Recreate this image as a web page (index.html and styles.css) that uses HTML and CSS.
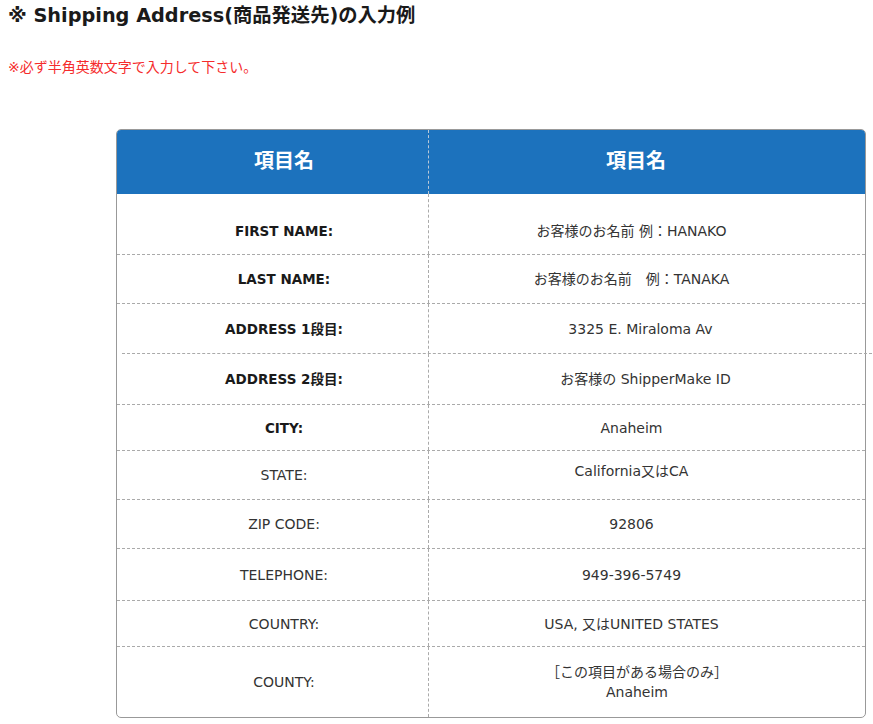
FILE: index.html
```html
<!DOCTYPE html>
<html lang="ja">
<head>
<meta charset="utf-8">
<title>Shipping Address</title>
<link rel="stylesheet" href="styles.css">
</head>
<body>
<h2 class="title">※ Shipping Address(商品発送先)の入力例</h2>
<p class="note">※必ず半角英数文字で入力して下さい。</p>
<div class="sheet">
  <div class="row head">
    <div class="cell key">項目名</div>
    <div class="cell val">項目名</div>
  </div>
  <div class="row r1">
    <div class="cell key strong">FIRST NAME:</div>
    <div class="cell val">お客様のお名前 例：HANAKO</div>
  </div>
  <div class="row r2">
    <div class="cell key strong">LAST NAME:</div>
    <div class="cell val">お客様のお名前　例：TANAKA</div>
  </div>
  <div class="row r3">
    <div class="cell key strong">ADDRESS 1段目:</div>
    <div class="cell val shift-s">3325 E. Miraloma Av</div>
  </div>
  <div class="row r4">
    <div class="cell key strong">ADDRESS 2段目:</div>
    <div class="cell val shift-l">お客様の ShipperMake ID</div>
  </div>
  <div class="row r5">
    <div class="cell key strong">CITY:</div>
    <div class="cell val">Anaheim</div>
  </div>
  <div class="row r6">
    <div class="cell key">STATE:</div>
    <div class="cell val raised">California又はCA</div>
  </div>
  <div class="row r7">
    <div class="cell key">ZIP CODE:</div>
    <div class="cell val">92806</div>
  </div>
  <div class="row r8">
    <div class="cell key">TELEPHONE:</div>
    <div class="cell val">949-396-5749</div>
  </div>
  <div class="row r9">
    <div class="cell key">COUNTRY:</div>
    <div class="cell val">USA, 又はUNITED STATES</div>
  </div>
  <div class="row r10">
    <div class="cell key">COUNTY:</div>
    <div class="cell val shift-m">［この項目がある場合のみ］<br>Anaheim</div>
  </div>
</div>
</body>
</html>
```
FILE: styles.css
```css
html, body {
  margin: 0;
  padding: 0;
  background: #fff;
}
body {
  font-family: "DejaVu Sans", "Noto Sans CJK JP", sans-serif;
  color: #333;
}
.title {
  margin: 0;
  padding: 4px 0 0 8px;
  font-size: 19.3px;
  line-height: 24px;
  font-weight: bold;
  color: #1a1a1a;
}
.note {
  margin: 30px 0 0 8px;
  font-size: 14px;
  line-height: 18px;
  color: #f52c2c;
}
.sheet {
  margin: 53px 0 0 116px;
  width: 748px;
  border: 1px solid #999;
  border-radius: 5px;
  box-sizing: content-box;
}
.row {
  display: grid;
  grid-template-columns: 312px 436px;
  border-bottom: 1px dashed #aaa;
  box-sizing: border-box;
  position: relative;
}
.cell {
  display: flex;
  align-items: center;
  justify-content: center;
  text-align: center;
  font-size: 14px;
  line-height: 20px;
}
.key {
  border-right: 1px dashed #aaa;
  padding-left: 23px;
}
.val {
  padding-right: 31px;
}
.val.shift-s { padding-right: 13px; }
.val.shift-l { padding-right: 3px; }
.val.shift-m { padding-right: 20px; }
.strong {
  font-weight: bold;
  font-size: 13.5px;
  color: #1a1a1a;
}
.head {
  height: 64px;
  background: #1c72bd;
  border-bottom: none;
  border-radius: 4px 4px 0 0;
}
.head .cell {
  color: #fff;
  font-weight: bold;
  font-size: 20px;
  padding-bottom: 2px;
}
.head .key {
  border-right-color: #b9c9d8;
}
.head .val {
  padding-right: 22px;
}
.r1 { height: 61px; }
.r1 .cell { padding-top: 14px; }
.r2 { height: 49px; }
.r3 { height: 50px; border-bottom: none; }
.r3::after {
  content: "";
  position: absolute;
  left: 5px;
  right: -7px;
  bottom: 0;
  border-top: 1px dashed #aaa;
}
.r4 { height: 51px; }
.r5 { height: 46px; }
.r6 { height: 49px; }
.r6 .raised { padding-bottom: 8px; }
.r7 { height: 49px; }
.r8 { height: 52px; }
.r9 { height: 46px; }
.r10 { height: 70px; border-bottom: none; }
```
